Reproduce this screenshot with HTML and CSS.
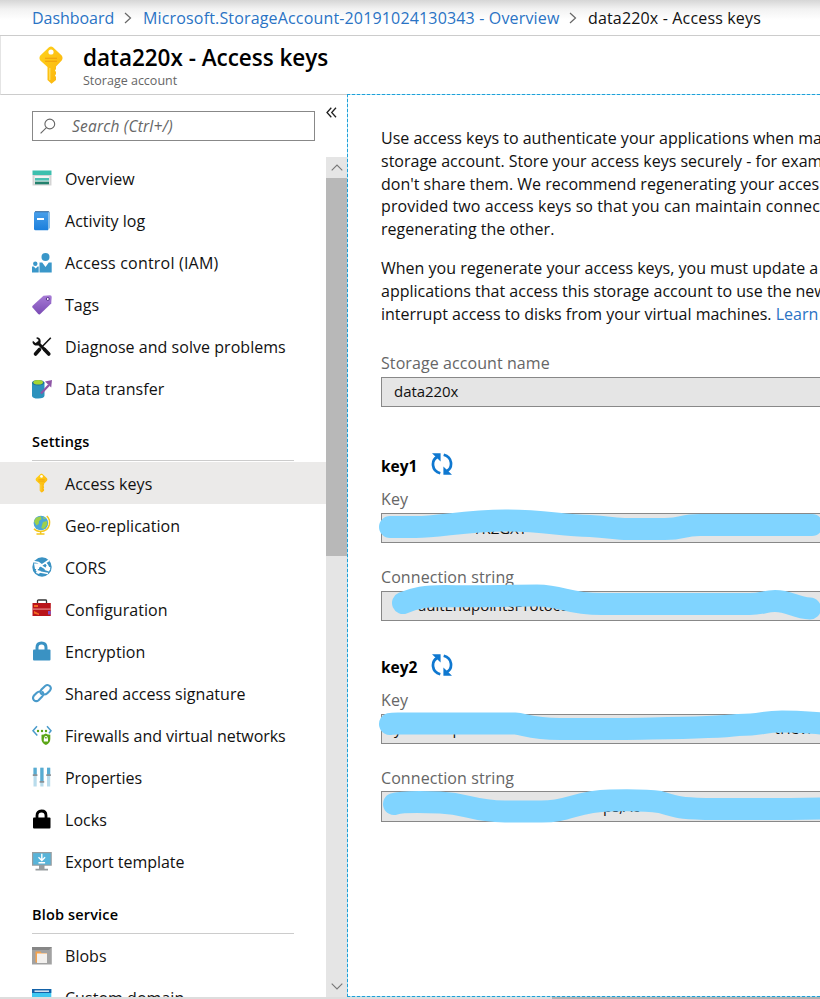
FILE: index.html
```html
<!DOCTYPE html>
<html lang="en">
<head>
<meta charset="utf-8">
<title>data220x - Access keys</title>
<link rel="stylesheet" href="styles.css">
</head>
<body>
<svg width="0" height="0" class="defs">
  <defs>
    <linearGradient id="gold" x1="0" y1="0" x2="1" y2="1"><stop offset="0" stop-color="#ffd21a"/><stop offset="1" stop-color="#fbb30f"/></linearGradient>
    <linearGradient id="book" x1="0" y1="0" x2="0" y2="1"><stop offset="0" stop-color="#4aa0ea"/><stop offset="1" stop-color="#1b7fdc"/></linearGradient>
    <linearGradient id="tag" x1="0" y1="0" x2="0" y2="1"><stop offset="0" stop-color="#a77bd6"/><stop offset="1" stop-color="#7a4bb4"/></linearGradient>
    <symbol id="key" viewBox="0 0 24 38">
      <path fill="url(#gold)" d="M10 1.2Q12 0 14 1.2L22.7 9.6Q24.4 12 22.7 14.5L17 20.5V23l-1 1.500L17 26v2l-1 1.500L17 31v3l-4.500 3.800L8.500 34V21L1.300 14.500Q-.4 12 1.300 9.600Z"/>
      <circle cx="12" cy="6" r="2.600" fill="#fff"/>
      <path d="M6 12.300h12M6 15.300h12" stroke="#ee9d0c" stroke-width="1.100"/>
      <path d="M10.800 22v12" stroke="#ffe066" stroke-width="1.200"/>
    </symbol>
    <symbol id="refresh" viewBox="0 0 22 22">
      <path fill="none" stroke="#0f78d0" stroke-width="2.700" d="M9.300 20.300C.2 17.800.2 7.500 6 4M12.700 1.700C21.800 4.200 21.800 14.500 16 18"/>
      <path fill="#0f78d0" d="M1 .3h8.600v8.200ZM21 21.700h-8.600v-8.200Z"/>
    </symbol>
  </defs>
</svg>
<nav class="crumbs">
  <a class="c1">Dashboard</a>
  <svg class="sep" viewBox="0 0 8 12"><path d="M1 1l5.500 5L1 11"/></svg>
  <a class="c2">Microsoft.StorageAccount-20191024130343 - Overview</a>
  <svg class="sep" viewBox="0 0 8 12"><path d="M1 1l5.500 5L1 11"/></svg>
  <span class="c3">data220x - Access keys</span>
</nav>
<header class="head">
  <svg class="head-key"><use href="#key"/></svg>
  <div class="titles">
    <h1>data220x - Access keys</h1>
    <p>Storage account</p>
  </div>
</header>
<div class="body">
  <aside class="side">
    <div class="searchrow">
      <div class="search">
        <svg viewBox="0 0 16 16"><circle cx="9.800" cy="6" r="4.900"/><path d="M6.400 9.600L.6 15.300"/></svg>
        <span>Search (Ctrl+/)</span>
      </div>
      <svg class="collapse" viewBox="0 0 11 11"><path d="M5.300 .7L1 5.500l4.300 4.800M10 .7L5.700 5.500 10 10.300"/></svg>
    </div>
    <div class="scroller">
      <div class="menu">
        <a class="item"><svg viewBox="0 0 20 20"><path fill="#d4d4d4" d="M.5 6h19v10.500H.5z"/><path fill="#3dbfae" d="M.5 1.500h19V6H.5z"/><path fill="#f4f4f4" d="M2.500 7h15v8h-15z"/><path fill="#4dc0b2" d="M3 9h14v2.600H3z"/><path fill="#23816d" d="M3 12.600h14v2.700H3z"/></svg><span>Overview</span></a>
        <a class="item"><svg viewBox="0 0 20 20"><path fill="#8cbfe9" d="M15 .8h3v16l-2 2.400z"/><path fill="url(#book)" d="M3.500.5H16v18.700H3.500Q2 19.200 2 17.700V2Q2 .5 3.500.5Z"/><path fill="#2f5f92" d="M3 .3h14v.9H3z"/><path fill="#fff" d="M5 7h7v2H5z"/></svg><span>Activity log</span></a>
        <a class="item"><svg viewBox="0 0 20 20" fill="#3a97c9"><circle cx="13.500" cy="4" r="4"/><path d="M7.500 19.500V9.500h2.700l3.300 4.500 3.300-4.500h2.900v10zM0 19.500v-6h1.700l2 2 2-2h1v6z"/><circle cx="3.300" cy="10.800" r="2.200"/></svg><span class="iam">Access control (IAM)</span></a>
        <a class="item"><svg viewBox="0 0 20 20"><path fill="url(#tag)" d="M11.500.8L18 .3q1.700 0 1.700 1.700l-.5 6.500L8 19.200q-1 .6-1.800-.2L.5 12.500q-.6-1 .1-1.800z"/><circle cx="15.800" cy="4" r="1.500" fill="#fff" stroke="#5b318f"/></svg><span>Tags</span></a>
        <a class="item"><svg viewBox="0 0 20 20"><path stroke="#111" stroke-width="1.500" d="M18.800.8L8.800 11"/><path stroke="#111" stroke-width="3.600" stroke-linecap="round" d="M7.500 12.500L3.500 17M12.500 12.500l4.300 4.500"/><path stroke="#111" stroke-width="3" d="M5 5l8 8"/><path fill="#111" d="M5.500.3q4 1 3 6L6 8.500Q1.500 9.200.5 5.500l.4-1.700L3.500 6l2.500-.7.500-2.600L4 .9z"/></svg><span>Diagnose and solve problems</span></a>
        <a class="item"><svg viewBox="0 0 20 20"><path fill="#2c92bd" d="M0 3.500h12.500v13q0 3-6.300 3T0 16.500z"/><ellipse cx="6.200" cy="3.800" rx="6.200" ry="2.800" fill="#1c7298"/><ellipse cx="6.200" cy="3.300" rx="4.800" ry="2.300" fill="#a4d632"/><path stroke="#8e55a5" stroke-width="2.200" d="M9 14.500l8-8.500"/><path fill="#8e55a5" d="M13 2.500L20 1l-.8 7.500z"/></svg><span>Data transfer</span></a>
        <h2>Settings</h2>
        <div class="group">
        <a class="item on"><svg viewBox="0 0 20 20"><use href="#key" x="3" y=".3" width="13" height="19.500"/></svg><span>Access keys</span></a>
        <a class="item"><svg viewBox="0 0 20 20"><circle cx="8.900" cy="8" r="7.300" fill="#4ba6d8"/><path fill="#9ed04b" d="M4 2.800l5-1.500.5 3L7 6l-.3 3-2.200 1.500L2 6.500zM11 7l4-1 .3 3.500-3.500 4.500-2.500-1 .8-3zM11 1.500l3 2-2.300.8z"/><path fill="none" stroke="#f3c61c" stroke-width="1.500" d="M14.800 1q3.500 3.500 2.600 8.500-1.500 7-9 7-4 0-6.400-2.700M8.700 16.500v2M4.500 19h8"/></svg><span>Geo-replication</span></a>
        <a class="item"><svg viewBox="0 0 20 20"><circle cx="10" cy="10" r="9.700" fill="#3a92c3"/><path fill="none" stroke="#fff" stroke-width="1.700" d="M2 4.800q4-.5 8 3.200l7-4.800M10 8q-5 2-5.500 6M6 7l9 5.500M5 14.500l11 2M13 5q3 3 4.500 8"/><path fill="#fff" d="M2 6.500h5V12H3zM14.500 8.500l4 2-1.500 4-4.500-1.500zM5 13l4 1-2 3-3-1z"/></svg><span>CORS</span></a>
        <a class="item"><svg viewBox="0 0 20 20"><path fill="none" stroke="#333" stroke-width="1.300" d="M5.500 4V1.800Q5.500 1 6.500 1h7q1 0 1 .8V4"/><path fill="#b9141a" d="M.5 4h18.300v13H.5z"/><path fill="#e4888a" d="M.5 9.500h18.300v1.200H.5z"/><path fill="#f36b22" d="M2 6h4v2H2zM2 12l5 2.500V16L2 14.500z"/><path fill="#8a4ec0" d="M16 12h2.800v3.500H16z"/></svg><span>Configuration</span></a>
        <a class="item"><svg viewBox="0 0 20 20"><path fill="none" stroke="#3a92c3" stroke-width="3" d="M5 10V6.500Q5 2 9.500 2T14 6.500V10"/><rect x="1" y="8.500" width="17.500" height="11" rx="1" fill="#3a92c3"/></svg><span>Encryption</span></a>
        <a class="item"><svg viewBox="0 0 20 20"><g fill="none" stroke="#4a9bcb" stroke-width="2.100" stroke-linecap="round"><path d="M12 11.500q2 0 3.300-1.300l2.500-2.500q2-2.200.2-4.500-2.300-2.300-4.900-.2L9.500 6.500Q7.500 9 9.500 11"/><path d="M8 8.500q-2 0-3.200 1.200L2 12.500Q0 15 2 17.200q2.300 1.900 4.600 0L10.200 13.500q2-2.300.3-4.500"/></g></svg><span>Shared access signature</span></a>
        <a class="item"><svg viewBox="0 0 20 20"><path fill="none" stroke="#4a9bcb" stroke-width="1.500" d="M5 1.200L1 5.800l4.300 4.800M15 1.200l4 4.600-2 2.500"/><g fill="#5aa516"><circle cx="6" cy="6" r="1.200"/><circle cx="10" cy="6" r="1.200"/><circle cx="14" cy="6" r="1.200"/><path d="M9.500 9.800q2.500 0 4.300-1.300 1.800 1.300 4.500 1.300v4.200q0 4-4.400 6-4.400-2-4.400-6z"/></g><path fill="#fff" d="M11.800 13.500h4.200v3h-4.200z"/><path fill="none" stroke="#fff" d="M12.600 14v-1.500q0-1.200 1.300-1.200t1.300 1.200V14"/></svg><span class="fw">Firewalls and virtual networks</span></a>
        <a class="item"><svg viewBox="0 0 20 20"><path fill="#b9dcec" d="M1.500.8h3.200v18.700H1.500zM8.300.8h3.200v18.700H8.300zM15 .8h3.200v18.700H15z"/><path fill="#58acd2" d="M1.500.8h3.200V8H1.500zM8.300.8h3.200V14H8.300zM15 .8h3.200V8H15z"/><path fill="#8b9297" d="M.8 7.300h4.600V9H.8zM7.600 14h4.600v1.700H7.600zM14.300 7.300h4.600V9h-4.600z"/></svg><span class="fw">Properties</span></a>
        <a class="item"><svg viewBox="0 0 20 20"><path fill="none" stroke="#000" stroke-width="2.800" d="M5 10V6.500Q5 2 9.500 2T14 6.500V10"/><rect x="1" y="8.500" width="17.500" height="11" rx="1"/></svg><span>Locks</span></a>
        <a class="item"><svg viewBox="0 0 20 20"><path fill="#979da0" d="M0 1h19.800v13.800H0zM7 14.800h5.500v3H16v1.700H3.500v-1.700H7z"/><path fill="#58b4d9" d="M1.200 2.200h17.400v11.400H1.200z"/><path fill="none" stroke="#fff" stroke-width="1.400" d="M9.800 2.800v6.500M6.500 6.300l3.300 3.200 3.300-3.200M6.500 11.800h6.600"/></svg><span class="fw">Export template</span></a>
        </div>
        <h2 class="blob">Blob service</h2>
        <a class="item"><svg viewBox="0 0 20 20"><path fill="#a2a2a2" d="M0 1h19.800v17.500H0z"/><path fill="#868686" d="M0 1h19.800L17 4H0z"/><path fill="#f5a24c" d="M3.500 5.500h5L9.500 7H15v9.500H3.500z"/><path fill="#f2f0ee" d="M5 7.500h10v9.500H5z"/></svg><span>Blobs</span></a>
        <a class="item"><svg viewBox="0 0 20 20"><path fill="#3fc8f1" d="M0 1h19.300v18H0z"/><path fill="#1362a8" d="M0 1h19.300v4H0z"/><path fill="#fff" d="M2.500 2.500H17v1.300H2.500z"/></svg><span>Custom domain</span></a>
      </div>
      <div class="bar">
        <svg viewBox="0 0 12 7"><path d="M.7 6.300L6 1l5.300 5.300"/></svg>
        <div class="thumb"></div>
        <svg viewBox="0 0 12 7"><path d="M.7.7L6 6 11.300.7"/></svg>
      </div>
    </div>
  </aside>
  <main class="main">
    <p class="para">
      <span>Use access keys to authenticate your applications when ma</span>
      <span>storage account. Store your access keys securely - for exam</span>
      <span>don't share them. We recommend regenerating your acces</span>
      <span class="wide">provided two access keys so that you can maintain connec</span>
      <span>regenerating the other.</span>
    </p>
    <p class="para second">
      <span>When you regenerate your access keys, you must update a</span>
      <span>applications that access this storage account to use the new</span>
      <span>interrupt access to disks from your virtual machines. <a>Learn</a></span>
    </p>
    <label class="l1">Storage account name</label>
    <div class="field"><span>data220x</span></div>

    <h3 class="k1">key1 <svg><use href="#refresh"/></svg></h3>
    <label>Key</label>
    <div class="field"><span class="frag-a">/RZGXT</span>
      <svg class="ink" viewBox="0 0 460 50"><path d="M20 24H46C70 24 95 17.500 135 17.500S190 22.500 220 23C240 24 245 26 258 26H295C315 26 310 22 330 22H442"/></svg></div>
    <label class="gap">Connection string</label>
    <div class="field"><span class="frag-e">aultEndpointsProtoco</span>
      <svg class="ink" viewBox="0 0 460 50"><path d="M33 22C45 17 55 15 75 15C110 16 130 14.500 167 14.500C195 15 195 23 232 23H380C392 23 395 20 405 20C420 20 425 27 440 27.500"/></svg></div>

    <h3 class="k2">key2 <svg><use href="#refresh"/></svg></h3>
    <label>Key</label>
    <div class="field"><span>y</span><span class="frag-b">p</span><span class="frag-c">trievi</span>
      <svg class="ink" viewBox="0 0 460 50"><path d="M20 20C24 19 28 19.500 35 19.500H145C155 20 160 25 190 25H250C300 24 345 24 368 21C395 21 390 17.500 412 17.500S440 19 460 20"/></svg></div>
    <label class="gap">Connection string</label>
    <div class="field tall"><span class="frag-d">ps;Ac</span>
      <svg class="ink" viewBox="0 0 460 50"><path d="M24 23C30 21 45 20.500 70 21.500C100 23 100 30 135 30.500H170C200 31 205 20 240 19.500C260 19 280 19.500 290 21C310 27 310 27 335 28H420L470 27"/></svg></div>
  </main>
</div>
<footer class="foot"><div></div></footer>
</body>
</html>
```
FILE: styles.css
```css
* { box-sizing: border-box; }
body {
  margin: 0;
  width: 820px;
  height: 999px;
  overflow: hidden;
  display: flex;
  flex-direction: column;
  background: #fff;
  color: #111;
  font: 16px/22.75px "Open Sans", "Noto Sans", sans-serif;
}
.defs { position: absolute; }
h1, h2, h3, p { margin: 0; }
a { color: #2a73c4; }

.crumbs {
  height: 36px;
  flex: none;
  display: flex;
  align-items: center;
  padding: 1px 0 0 32px;
  border-bottom: 1px solid #ccc;
  background: linear-gradient(#d6d6d6, #f2f2f2 9px, #fff 20px);
  white-space: nowrap;
}
.c1 { width: 82px; letter-spacing: -0.05px; }
.c2 { width: 416px; letter-spacing: 0.16px; }
.c3 { letter-spacing: 0.16px; }
.sep { width: 8px; height: 12px; margin: 0 11px 0 10px; fill: none; stroke: #666; stroke-width: 1.2; }

.head {
  height: 59px;
  flex: none;
  display: flex;
  padding-left: 38px;
  border-bottom: 1px solid #ccc;
  border-left: 1px solid #e4e4e4;
}
.head-key { width: 24px; height: 38px; margin-top: 10px; }
.titles { margin-left: 20px; }
.titles h1 { font-size: 22.5px; line-height: 30px; margin-top: 7px; font-weight: 600; color: #000; letter-spacing: -0.02px; }
.titles p { font-size: 12.5px; line-height: 16px; color: #666; }

.body { height: 902px; flex: none; display: flex; }
.side { width: 347px; flex: none; display: flex; flex-direction: column; }
.searchrow { height: 62px; flex: none; display: flex; padding: 16px 0 0 32px; }
.search {
  width: 283px;
  height: 30px;
  border: 1px solid #888;
  display: flex;
  align-items: center;
  padding-left: 7px;
  color: #666;
  font-size: 15.5px;
  letter-spacing: 0.2px;
  font-style: italic;
}
.search svg { width: 16px; height: 16px; fill: none; stroke: #666; stroke-width: 1.1; margin-right: 16px; }
.collapse { width: 11px; height: 11px; margin: -4px 0 0 11px; fill: none; stroke: #222; stroke-width: 1.3; }

.scroller { flex: 1; min-height: 0; display: flex; }
.menu { width: 326px; overflow: hidden; padding-top: 1px; letter-spacing: 0.04px; }
.item { height: 42px; display: flex; align-items: center; padding-left: 32px; color: #111; }
.item svg { width: 20px; height: 20px; margin: -1px 13px 0 0; }
.item .iam { letter-spacing: 0.2px; }
.item .fw { letter-spacing: -0.04px; }
.item.on { background: #ebeae9; }
.group svg { margin-top: 0; }
.group span { padding-top: 2px; }
.menu h2 {
  height: 51px;
  width: 262px;
  margin: 0 0 1px 32px;
  padding-top: 21px;
  font-size: 14.5px;
  line-height: 22px;
  font-weight: 600;
  letter-spacing: 0.16px;
  border-bottom: 1px solid #ccc;
  color: #000;
}
.menu h2.blob { height: 52px; padding-top: 22px; }
.bar { width: 21px; background: #e5e5e5; display: flex; flex-direction: column; align-items: center; padding: 7px 0; }
.bar svg { width: 12px; height: 7px; fill: none; stroke: #777; stroke-width: 1.1; }
.thumb { width: 21px; height: 378px; margin: 7px 0 auto; background: #b8b8b8; }

.main {
  flex: 1;
  min-width: 0;
  margin-top: -1px;
  padding: 32px 0 0 33px;
  overflow: hidden;
  border: dashed #1fa0d8;
  border-width: 1px 0 1px 1px;
  background: linear-gradient(#fff, #fff) padding-box, linear-gradient(#a8e2f8, #a8e2f8) border-box;
  display: flex;
  flex-direction: column;
}
.para { margin-bottom: 16px; color: #111; }
.para.second { padding-top: 0.4px; margin-bottom: 15.6px; }
.para span { display: block; white-space: nowrap; }
.para .wide { letter-spacing: 0.09px; }
label { color: #666; line-height: 22px; letter-spacing: 0.08px; }
.l1 { margin-top: 11px; }
.field {
  position: relative;
  width: 460px;
  height: 30px;
  flex: none;
  margin-top: 3px;
  padding: 0 0 1px 12px;
  border: 1px solid #888;
  background: #e5e5e5;
  display: flex;
  align-items: center;
  white-space: nowrap;
  font-size: 15px;
  letter-spacing: -0.05px;
}
.field.tall { height: 31px; margin-top: 2px; }
.ink {
  position: absolute;
  left: -12px;
  top: -11px;
  width: 460px;
  height: 50px;
  overflow: visible;
  fill: none;
  stroke: #80d4ff;
  stroke-width: 22;
  stroke-linecap: round;
}
.frag-a { margin-left: 82px; padding-top: 1px; }
.frag-b { margin-left: 51px; }
.frag-c { margin-left: 313px; letter-spacing: 0.3px; }
.frag-d { margin-left: 209px; padding-top: 1px; }
.frag-e { margin-left: 24px; }
.gap { margin-top: 23px; }
h3 { display: flex; align-items: center; font-size: 15.5px; line-height: 22px; color: #000; }
h3 svg { width: 22px; height: 22px; margin: -4px 0 0 14px; }
.k1 { margin-top: 48px; margin-bottom: 11px; }
.k2 { margin-top: 35px; margin-bottom: 11px; }

.foot { height: 2px; flex: none; background: #ddd; }
.foot div { width: 268px; height: 2px; margin-left: auto; background: #b0b0b0; }
```
